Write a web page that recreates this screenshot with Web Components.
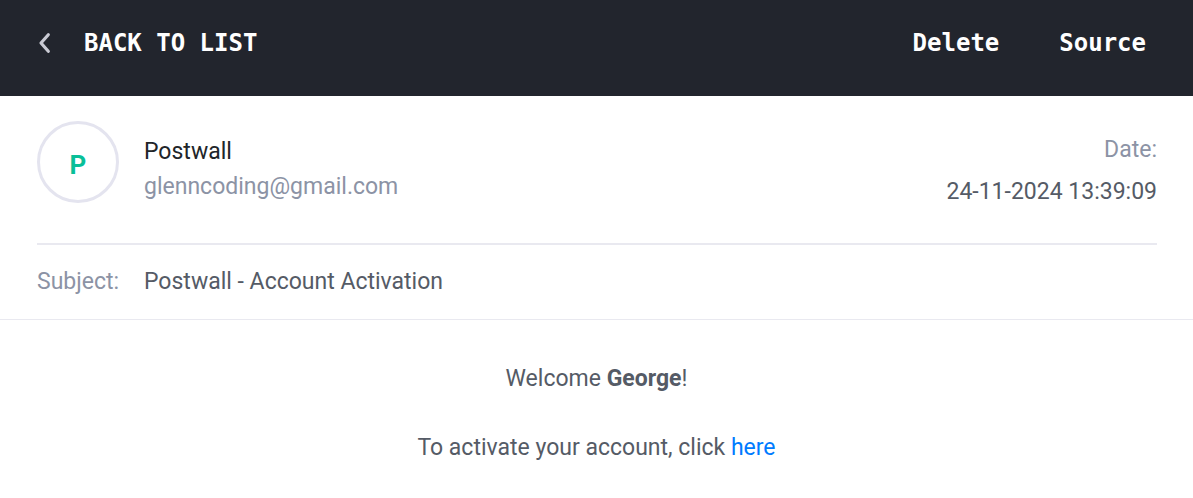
<!DOCTYPE html>
<html lang="en">
<head>
<meta charset="utf-8">
<meta name="viewport" content="width=device-width, initial-scale=1">
<title>Postwall - Account Activation</title>
<style>
body { margin: 0; background: #fff; color: #555b66; font: 23px/32px Roboto, "Liberation Sans", sans-serif; }
a { color: #007bff; text-decoration: none; }
p { margin: 0; }
</style>
</head>
<body>
<mail-view>
  <mail-toolbar slot="toolbar">
    <mail-action slot="back" icon>BACK TO LIST</mail-action>
    <mail-action>Delete</mail-action>
    <mail-action>Source</mail-action>
  </mail-toolbar>
  <mail-header slot="header">
    <mail-avatar slot="avatar">P</mail-avatar>
    <span slot="name">Postwall</span>
    <span slot="email">glenncoding@gmail.com</span>
    <time slot="date" datetime="2024-11-24T13:39:09">24-11-2024 13:39:09</time>
    <span slot="subject">Postwall - Account Activation</span>
  </mail-header>
  <mail-body>
    <p>Welcome <b>George</b>!</p>
    <p>To activate your account, click <a href="#activate">here</a></p>
  </mail-body>
</mail-view>
<script>
const define = (name, html) => {
  const template = document.createElement("template");
  template.innerHTML = html;
  customElements.define(name, class extends HTMLElement {
    constructor() {
      super();
      this.attachShadow({ mode: "open" }).append(template.content.cloneNode(true));
    }
  });
};

define("mail-view", `
  <style>:host { display: block; } main { display: block; }</style>
  <slot name="toolbar"></slot>
  <main><slot name="header"></slot><slot></slot></main>`);

define("mail-toolbar", `
  <style>
    :host { display: block; background: #22252d; color: #fff; }
    nav { display: flex; justify-content: space-between; padding: 27px 47px 37px 36px; }
    div { display: flex; gap: 60px; }
  </style>
  <nav aria-label="Message"><slot name="back"></slot><div><slot></slot></div></nav>`);

define("mail-action", `
  <style>
    :host { display: block; }
    button { display: flex; align-items: center; gap: 32px; margin: 0; padding: 0; border: 0;
      background: none; color: inherit; cursor: pointer;
      font: bold 24px/32px "DejaVu Sans Mono", "Liberation Mono", monospace; }
    svg { display: none; width: 16px; height: 24px; }
    :host([icon]) svg { display: block; }
  </style>
  <button type="button">
    <svg viewBox="0 0 16 24" aria-hidden="true"><path d="M12.3 3.8 5 12l7.3 8.2" fill="none" stroke="#c9cad3" stroke-width="3.2" stroke-linecap="round" stroke-linejoin="round"/></svg>
    <span><slot></slot></span>
  </button>`);

define("mail-avatar", `
  <style>
    :host { display: flex; align-items: center; justify-content: center; box-sizing: border-box;
      width: 82px; height: 82px; border: 3px solid #e4e4ef; border-radius: 50%; padding-top: 6px;
      color: #09bf98; font: bold 26px/32px Roboto, "Liberation Sans", sans-serif; }
  </style>
  <slot></slot>`);

define("mail-header", `
  <style>
    :host { display: block; border-bottom: 1px solid #e9e9f0; }
    .sender { display: flex; align-items: flex-start; gap: 25px; margin: 0 36px 0 37px;
      padding: 25px 0 35px; border-bottom: 2px solid #e9e9f0; }
    .who { flex: 1; display: grid; row-gap: 3px; padding-top: 15px; }
    .when { display: grid; row-gap: 10px; padding-top: 13px; text-align: right; }
    .name { color: #212529; }
    .muted { color: #8c93a5; }
    .subject { display: flex; gap: 25px; padding: 21px 37px; }
    .subject .muted { width: 82px; }
  </style>
  <div class="sender">
    <slot name="avatar"></slot>
    <div class="who">
      <div class="name"><slot name="name"></slot></div>
      <div class="muted"><slot name="email"></slot></div>
    </div>
    <div class="when">
      <div class="muted">Date:</div>
      <div><slot name="date"></slot></div>
    </div>
  </div>
  <div class="subject"><div class="muted">Subject:</div><div><slot name="subject"></slot></div></div>`);

define("mail-body", `
  <style>
    :host { display: grid; row-gap: 37px; padding: 43px 36px 34px; text-align: center; }
  </style>
  <slot></slot>`);
</script>
</body>
</html>
